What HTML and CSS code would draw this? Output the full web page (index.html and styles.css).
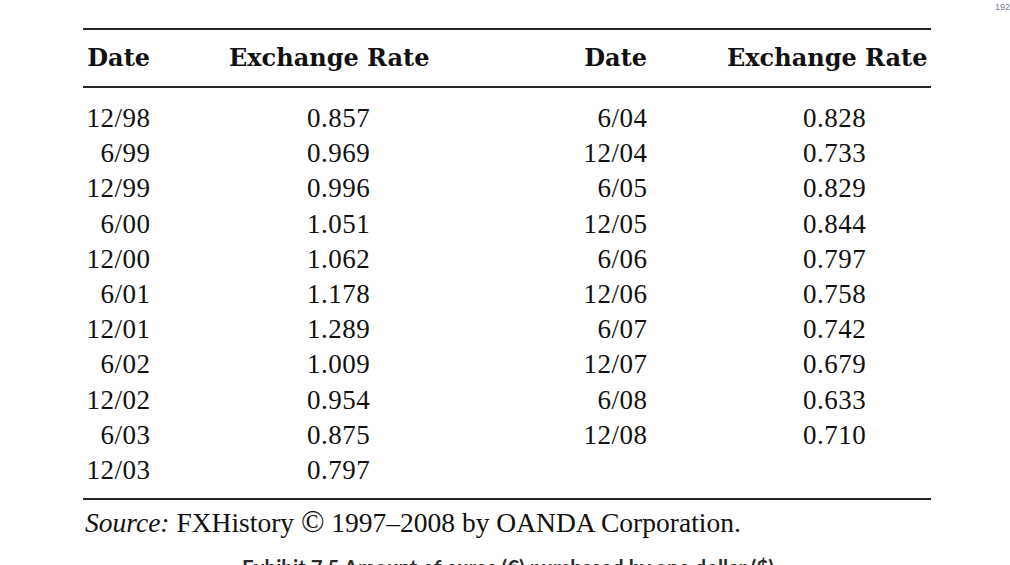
FILE: index.html
```html
<!DOCTYPE html>
<html lang="en">
<head>
<meta charset="utf-8">
<title>Exhibit 7.5</title>
<link rel="stylesheet" href="styles.css">
</head>
<body>
<div class="pagenum">192</div>
<section class="exhibit">
  <div class="head grid">
    <div class="date">Date</div>
    <div class="rate">Exchange Rate</div>
    <div class="date">Date</div>
    <div class="rate">Exchange Rate</div>
  </div>
  <div class="body">
    <div class="grid row"><div class="date">12/98</div><div class="rate">0.857</div><div class="date">6/04</div><div class="rate">0.828</div></div>
    <div class="grid row"><div class="date">6/99</div><div class="rate">0.969</div><div class="date">12/04</div><div class="rate">0.733</div></div>
    <div class="grid row"><div class="date">12/99</div><div class="rate">0.996</div><div class="date">6/05</div><div class="rate">0.829</div></div>
    <div class="grid row"><div class="date">6/00</div><div class="rate">1.051</div><div class="date">12/05</div><div class="rate">0.844</div></div>
    <div class="grid row"><div class="date">12/00</div><div class="rate">1.062</div><div class="date">6/06</div><div class="rate">0.797</div></div>
    <div class="grid row"><div class="date">6/01</div><div class="rate">1.178</div><div class="date">12/06</div><div class="rate">0.758</div></div>
    <div class="grid row"><div class="date">12/01</div><div class="rate">1.289</div><div class="date">6/07</div><div class="rate">0.742</div></div>
    <div class="grid row"><div class="date">6/02</div><div class="rate">1.009</div><div class="date">12/07</div><div class="rate">0.679</div></div>
    <div class="grid row"><div class="date">12/02</div><div class="rate">0.954</div><div class="date">6/08</div><div class="rate">0.633</div></div>
    <div class="grid row"><div class="date">6/03</div><div class="rate">0.875</div><div class="date">12/08</div><div class="rate">0.710</div></div>
    <div class="grid row"><div class="date">12/03</div><div class="rate">0.797</div><div class="date"></div><div class="rate"></div></div>
  </div>
  <p class="source"><em>Source:</em> FXHistory <span class="copy">©</span> 1997–2008 by OANDA Corporation.</p>
</section>
<p class="caption">Exhibit 7.5 Amount of euros (€) purchased by one dollar ($)</p>
</body>
</html>
```
FILE: styles.css
```css
html, body {
  margin: 0;
  padding: 0;
  background: #ffffff;
}
body {
  width: 1010px;
  height: 565px;
  overflow: hidden;
  color: #111111;
  font-family: "Liberation Serif", "Times New Roman", serif;
}
.pagenum {
  height: 14px;
  line-height: 14px;
  font-family: "Liberation Sans", Arial, sans-serif;
  font-size: 9px;
  color: #7c7a96;
  text-align: right;
}
.exhibit {
  width: 848px;
  margin: 14px 0 0 83px;
  border-top: 2px solid #262626;
}
.grid {
  display: grid;
  grid-template-columns: 65px 432px 65px 1fr;
  padding-left: 2px;
}
.head {
  height: 56px;
  line-height: 56px;
  font-family: "DejaVu Serif", "Liberation Serif", serif;
  font-weight: bold;
  font-size: 24px;
  border-bottom: 2px solid #262626;
  white-space: nowrap;
}
.head .date {
  margin-left: -2px;
}
.date {
  text-align: right;
}
.head .rate:nth-child(2) { padding-left: 79px; }
.head .rate:nth-child(4) { padding-left: 80px; }
.body {
  padding: 13px 0 10px;
  border-bottom: 2px solid #262626;
}
.row {
  height: 35.2px;
  line-height: 35.2px;
  font-size: 27px;
  letter-spacing: 0.5px;
}
.row .date { margin-right: -0.5px; }
.row .rate:nth-child(2) { padding-left: 157px; }
.row .rate:nth-child(4) { padding-left: 156px; }
.source {
  margin: 0;
  padding: 7px 0 0 2px;
  height: 30px;
  line-height: 30px;
  font-size: 27.5px;
}
.source em {
  font-style: italic;
}
.copy {
  font-size: 31px;
}
.caption {
  margin: 18px 0 0;
  padding-left: 6px;
  text-align: center;
  font-family: Lato, "Liberation Sans", sans-serif;
  font-weight: bold;
  font-size: 20.5px;
  line-height: 24px;
  color: #2b2b2b;
}
```
